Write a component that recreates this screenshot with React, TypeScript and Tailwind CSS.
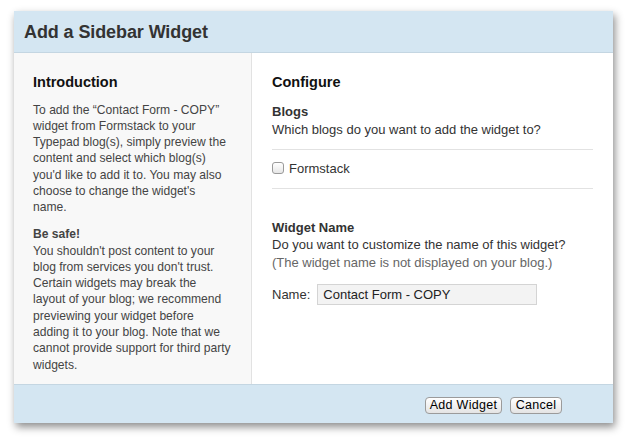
const introLines = [
  "To add the “Contact Form - COPY”",
  "widget from Formstack to your",
  "Typepad blog(s), simply preview the",
  "content and select which blog(s)",
  "you'd like to add it to. You may also",
  "choose to change the widget's",
  "name.",
];

const safeLines = [
  "You shouldn't post content to your",
  "blog from services you don't trust.",
  "Certain widgets may break the",
  "layout of your blog; we recommend",
  "previewing your widget before",
  "adding it to your blog. Note that we",
  "cannot provide support for third party",
  "widgets.",
];

const App = () => {
  return (
    <div className="w-[627px] h-[442px] bg-white pt-[11px] pl-[14px] font-['Liberation_Sans',Arial,sans-serif] text-[13px] text-[#333]">
      <div className="w-[599px] h-[412px] flex flex-col bg-white shadow-[2px_4px_8px_rgba(0,0,0,0.45)]">
        <div className="h-[42px] shrink-0 bg-[#d4e6f2] border-b border-[#c4d6e2] flex items-center pl-[10px] pt-[2px]">
          <h1 className="text-[18px] font-bold text-[#333] tracking-[-0.1px]">Add a Sidebar Widget</h1>
        </div>

        <div className="flex flex-1 min-h-0">
          <div className="w-[238px] shrink-0 bg-[#f8f8f8] border-r border-[#e2e2e2] pl-[19px] pr-[10px] pt-[21px] text-[12.1px] leading-[16.3px] text-[#444] whitespace-nowrap">
            <h2 className="text-[14.5px] leading-[17.5px] font-bold text-[#111] mb-[10px]">Introduction</h2>
            <div>
              {introLines.map((line) => (
                <div key={line}>{line}</div>
              ))}
            </div>
            <div className="mt-[10.7px]">
              <div className="font-bold">Be safe!</div>
              {safeLines.map((line) => (
                <div key={line}>{line}</div>
              ))}
            </div>
          </div>

          <div className="flex-1 pl-[20px] pr-[20px] pt-[21px] leading-[17.5px]">
            <h2 className="text-[14.5px] font-bold text-[#111] mb-[11.5px]">Configure</h2>
            <div className="font-bold">Blogs</div>
            <div>Which blogs do you want to add the widget to?</div>
            <div className="mt-[10.5px] border-t border-b border-[#e2e2e2] pt-[10px] pb-[10.5px] flex items-center gap-[5px]">
              <span className="w-[12px] h-[12px] rounded-[3px] border border-[#9a9a9a] bg-gradient-to-b from-white to-[#e6e6e6]" />
              <span>Formstack</span>
            </div>
            <div className="mt-[30px] font-bold">Widget Name</div>
            <div>Do you want to customize the name of this widget?</div>
            <div className="text-[#666]">(The widget name is not displayed on your blog.)</div>
            <div className="mt-[13px] flex items-center gap-[7px]">
              <span>Name:</span>
              <div className="w-[220px] h-[21px] bg-[#f3f3f3] border border-[#d4d4d4] pl-[5px] flex items-center text-[#222]">
                Contact Form - COPY
              </div>
            </div>
          </div>
        </div>

        <div className="h-[39px] shrink-0 bg-[#d4e6f2] border-t border-[#c4d6e2] flex items-center justify-end gap-[8px] pr-[51px] pt-[3px]">
          <button className="h-[17px] w-[77px] rounded-[4px] border border-[#9b9b9b] bg-gradient-to-b from-white to-[#e4e4e4] text-[12.5px] text-black leading-none tracking-[0.3px]">
            Add Widget
          </button>
          <button className="h-[17px] w-[52px] rounded-[4px] border border-[#9b9b9b] bg-gradient-to-b from-white to-[#e4e4e4] text-[12.5px] text-black leading-none tracking-[0.3px]">
            Cancel
          </button>
        </div>
      </div>
    </div>
  );
};

export default App;
